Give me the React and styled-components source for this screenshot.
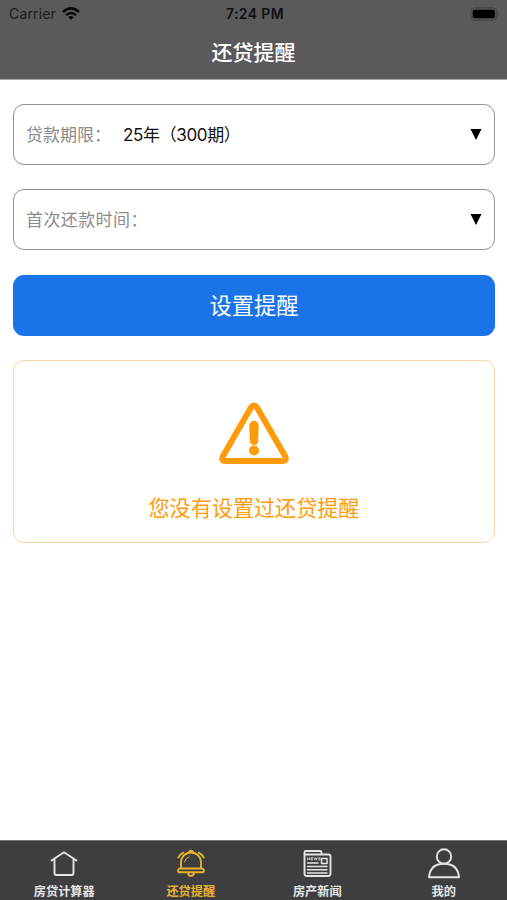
import React from "react";
import styled, { createGlobalStyle } from "styled-components";

const GlobalStyle = createGlobalStyle`
  * { box-sizing: border-box; }
  body { margin: 0; background: #fff; font-family: Inter, "Noto Sans CJK SC", sans-serif; }
`;

const Screen = styled.div`
  width: 507px;
  height: 900px;
  display: flex;
  flex-direction: column;
  overflow: hidden;
  background: #fff;
`;

const Header = styled.header`
  height: 80px;
  flex: none;
  background: #5a5a5c;
  border-bottom: 1px solid #a5a5a6;
`;

const StatusBar = styled.div`
  height: 27px;
  display: grid;
  grid-template-columns: 1fr auto 1fr;
  align-items: center;
  padding: 0 6px 0 9px;
  color: #111;
  font-size: 14px;
  line-height: 26px;
`;

const Carrier = styled.div`
  display: flex;
  align-items: center;
  gap: 6px;
  color: #1d1d1e;
  letter-spacing: 0.15px;
`;

const Clock = styled.div`
  font-size: 14px;
  font-weight: 600;
  letter-spacing: 0.4px;
`;

const Battery = styled.div`
  display: flex;
  justify-content: flex-end;
`;

const Title = styled.h1`
  margin: 0;
  height: 52px;
  color: #fff;
  font-size: 21px;
  font-weight: 500;
  line-height: 52px;
  text-align: center;
`;

const Content = styled.main`
  flex: 1;
  display: flex;
  flex-direction: column;
  gap: 24px;
  padding: 24px 12px 0 13px;
`;

const Field = styled.div`
  height: 61px;
  display: flex;
  align-items: center;
  padding: 0 12px;
  border: 1px solid #929292;
  border-radius: 11px;
`;

const Label = styled.span`
  color: #8b8b8b;
  font-size: 17px;
  line-height: 24px;
  letter-spacing: ${(p) => p.$spacing || "0"};
`;

const Value = styled.span`
  margin-left: 12px;
  color: #111;
  font-size: 17px;
  line-height: 24px;
  letter-spacing: -0.35px;
`;

const Arrow = styled.svg`
  width: 12px;
  height: 12px;
  margin-left: auto;
`;

const Button = styled.button`
  height: 61px;
  flex: none;
  margin-top: 1px;
  border: 0;
  border-radius: 11px;
  background: #1a74e8;
  color: #fff;
  font-family: inherit;
  font-size: 22.3px;
  line-height: 30px;
`;

const Notice = styled.section`
  height: 183px;
  display: flex;
  flex-direction: column;
  align-items: center;
  padding-top: 41px;
  border: 1px solid #fbd3a6;
  border-radius: 11px;
  color: #ff9b0b;
`;

const NoticeText = styled.p`
  margin: 28px 0 0;
  font-size: 21.1px;
  line-height: 32px;
`;

const TabBar = styled.nav`
  height: 60px;
  flex: none;
  display: grid;
  grid-template-columns: repeat(4, 1fr);
  padding: 0 0 0 1px;
  border-top: 1px solid #767677;
  background: #3e3e40;
`;

const Tab = styled.a`
  display: flex;
  flex-direction: column;
  align-items: center;
  padding-top: 5px;
  color: ${(p) => (p.$active ? "#e5b32f" : "#e5e5e5")};
  font-size: 12.2px;
  font-weight: 700;
  line-height: 18px;
`;

const TabIcon = styled.svg`
  width: 34px;
  height: 34px;
  margin-bottom: 3px;
  fill: none;
  stroke: currentColor;
  stroke-width: 1.9;
  stroke-linecap: round;
  stroke-linejoin: round;
`;

const tabs = [
  {
    label: "房贷计算器",
    icon: <path d="M4.500 14.500 17 6.200l12.500 8.300M7.500 13v14q0 2 2 2h15q2 0 2-2V13" />,
  },
  {
    label: "还贷提醒",
    active: true,
    icon: (
      <>
        <path d="M7 22.500v-6a10 10 0 0 1 20 0v6M6 22.500h22a1.900 1.900 0 0 1 0 3.800H6a1.900 1.900 0 0 1 0-3.800ZM14.700 7a2.300 2.300 0 1 1 4.600 0M14.300 27.200a2.700 2.700 0 0 0 5.400 0M4.300 11.500q1.500-3 5-4.800M29.700 11.500q-1.500-3-5-4.800" />
        <path d="M10.500 16q.7-4 4.500-5.200" strokeWidth="1" />
      </>
    ),
  },
  {
    label: "房产新闻",
    icon: (
      <>
        <path d="M4.500 8.500h24q2 0 2 2v17q0 2.500-2.500 2.500H7q-2.500 0-2.500-2.500V6.500q0-1.500 1.500-1.500H20q1.500 0 1.500 1.500v2" />
        <path d="M7.500 17h10.500M7.500 20.500H27M7.500 23.700H27M7.500 27H27M21.500 12.500h5.500v5h-5.500z" strokeWidth="1.500" />
        <path d="M7.500 14v-2.300l2 2.300v-2.300m3.200 0H11V14h1.700M11 12.900h1.400M14 11.700l.9 2.300.8-2.300.8 2.300.8-2.300M20 11.700h-1.300v1.100H20V14h-1.300" strokeWidth=".7" />
      </>
    ),
  },
  {
    label: "我的",
    icon: <><circle cx="17" cy="10.500" r="7.200" /><path d="M2 31.200c.7-8.200 5.400-13.500 15-13.500s14.300 5.300 15 13.500Z" /></>,
  },
];

function SelectField({ label, value, spacing }) {
  return (
    <Field>
      <Label $spacing={spacing}>{label}</Label>
      {value && <Value>{value}</Value>}
      <Arrow viewBox="0 0 12 12"><path d="M.5 0h11L6 11Z" /></Arrow>
    </Field>
  );
}

export default function App() {
  return (
    <>
      <GlobalStyle />
      <Screen>
        <Header>
          <StatusBar>
            <Carrier>
              Carrier
              <svg width="18" height="14" viewBox="0 0 18 14" fill="none" stroke="#080808" strokeWidth="2.500">
                <path d="M1 5Q9-2.200 17 5M4 8.100Q9 3.800 14 8.100" />
                <path d="M6.300 10.200Q9 8 11.700 10.200L9 13Z" fill="#080808" stroke="none" />
              </svg>
            </Carrier>
            <Clock>7:24 PM</Clock>
            <Battery>
              <svg width="31" height="14" viewBox="0 0 31 14">
                <rect x=".8" y=".8" width="26" height="12.400" rx="3.800" fill="#58585a" stroke="#434345" />
                <rect x="2.700" y="2.700" width="22.300" height="8.600" rx="2" fill="#000" />
                <path d="M28.500 5v4q1.800-2 0-4Z" fill="#39393b" />
              </svg>
            </Battery>
          </StatusBar>
          <Title>还贷提醒</Title>
        </Header>
        <Content>
          <SelectField label="贷款期限：" value="25年（300期）" />
          <SelectField label="首次还款时间：" spacing="0.4px" />
          <Button>设置提醒</Button>
          <Notice>
            <svg width="72" height="63" viewBox="0 0 72 63" fill="none" stroke="#ff9b0b" strokeWidth="6" strokeLinejoin="round">
              <path d="M33 5.500Q36 1.500 39 5.500L67 54Q69.500 59 64.500 59H7.500Q2.500 59 5 54Z" />
              <path d="M31.300 23.500a4.700 4.700 0 0 1 9.400 0l-.6 15.500a4.100 4.100 0 0 1-8.200 0Z" fill="#ff9b0b" stroke="none" />
              <circle cx="36" cy="48.500" r="5" fill="#ff9b0b" stroke="none" />
            </svg>
            <NoticeText>您没有设置过还贷提醒</NoticeText>
          </Notice>
        </Content>
        <TabBar>
          {tabs.map((tab) => (
            <Tab key={tab.label} $active={tab.active}>
              <TabIcon viewBox="0 0 34 34">{tab.icon}</TabIcon>
              {tab.label}
            </Tab>
          ))}
        </TabBar>
      </Screen>
    </>
  );
}
